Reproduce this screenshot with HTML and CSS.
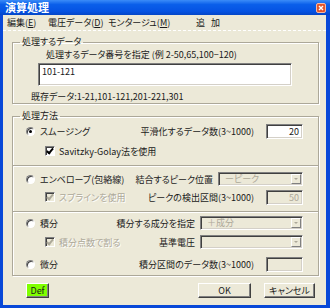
FILE: index.html
```html
<!DOCTYPE html>
<html lang="ja">
<head>
<meta charset="utf-8">
<link rel="stylesheet" href="styles.css">
</head>
<body>
<div class="window">
  <div class="titlebar">
    <span class="title">演算処理</span>
    <span class="close"><svg width="10" height="10" viewBox="0 0 10 10"><rect x="0.5" y="0.5" width="9" height="9" rx="1.5" fill="#e2552c" stroke="#f7b9a3"/><path d="M3 3L7 7M7 3L3 7" stroke="#fff" stroke-width="1.4"/></svg></span>
  </div>
  <div class="frame">
    <div class="menubar">
      <span class="menu m1">編集(<u>E</u>)</span>
      <span class="menu m2">電圧データ(<u>D</u>)</span>
      <span class="menu m3">モンタージュ(<u>M</u>)</span>
      <span class="menu m4">追 加</span>
    </div>
    <div class="content">
      <fieldset class="group g1">
        <legend>処理するデータ</legend>
        <div class="hint">処理するデータ番号を指定 (例 2-50,65,100−120)</div>
        <div class="textbox">101-121</div>
        <div class="existing">既存データ:1-21,101-121,201-221,301</div>
      </fieldset>
      <fieldset class="group g2">
        <legend>処理方法</legend>
        <div class="row r1">
          <div class="left radio-left"><span class="radio checked"></span><span>スムージング</span></div>
          <div class="right"><span class="lbl lbl-num">平滑化するデータ数(3~1000)</span><span class="numbox">20</span></div>
        </div>
        <div class="row r2">
          <div class="left check-left"><span class="check"></span><span>Savitzky-Golay法を使用</span></div>
        </div>
        <div class="sep"></div>
        <div class="row r3">
          <div class="left radio-left"><span class="radio"></span><span>エンベロープ(包絡線)</span></div>
          <div class="right"><span class="lbl lbl-combo">結合するピーク位置</span><span class="combo c-peak"><span class="ctext">ーピーク</span><span class="cbtn"></span></span></div>
        </div>
        <div class="row r4">
          <div class="left check-left disabled"><span class="check dis"></span><span>スプラインを使用</span></div>
          <div class="right"><span class="lbl lbl-num">ピークの検出区間(3~1000)</span><span class="numbox dis">50</span></div>
        </div>
        <div class="sep"></div>
        <div class="row r5">
          <div class="left radio-left"><span class="radio"></span><span>積分</span></div>
          <div class="right"><span class="lbl lbl-combo">積分する成分を指定</span><span class="combo c-wide"><span class="ctext">＋成分</span><span class="cbtn"></span></span></div>
        </div>
        <div class="row r6">
          <div class="left check-left disabled"><span class="check dis"></span><span>積分点数で割る</span></div>
          <div class="right"><span class="lbl lbl-combo">基準電圧</span><span class="combo c-wide"><span class="ctext"></span><span class="cbtn"></span></span></div>
        </div>
        <div class="row r7">
          <div class="left radio-left"><span class="radio"></span><span>微分</span></div>
          <div class="right"><span class="lbl lbl-num">積分区間のデータ数(3~1000)</span><span class="numbox dis"></span></div>
        </div>
      </fieldset>
      <div class="buttons">
        <span class="btn def">Def</span>
        <span class="btn ok">OK</span>
        <span class="btn cancel">キャンセル</span>
      </div>
    </div>
  </div>
</div>
</body>
</html>
```
FILE: styles.css
```css
html, body {
  margin: 0;
  padding: 0;
}
body {
  font-family: "Noto Sans CJK JP", "Noto Sans", sans-serif;
  font-size: 9px;
  font-feature-settings: "palt";
  color: #1a1a1a;
  background: #fff;
  white-space: nowrap;
}
.window {
  width: 330px;
  height: 308px;
  display: flex;
  flex-direction: column;
}
.titlebar {
  height: 15px;
  flex: none;
  display: flex;
  align-items: center;
  background: linear-gradient(#3b8cf8, #0a5fea 30%, #0553e3 75%, #0446c6);
  color: #fff;
  padding: 0 4px 0 5px;
}
.title {
  font-weight: bold;
  font-size: 11px;
  line-height: 15px;
  font-feature-settings: normal;
}
.close {
  margin-left: auto;
  display: flex;
}
.frame {
  flex: 1;
  background: #ece9d8;
  border-style: solid;
  border-color: #0848d8;
  border-width: 0 4px 3px 3px;
  display: flex;
  flex-direction: column;
}
.menubar {
  height: 15px;
  display: flex;
  align-items: center;
  padding-left: 4px;
  border-bottom: 1px dashed #fff;
  line-height: 15px;
}
.m1 { width: 41px; }
.m2 { width: 60px; }
.m3 { width: 88px; }
.m4 { letter-spacing: 2px; }
.content {
  padding: 5px 7px 0 9px;
  display: flex;
  flex-direction: column;
}
.group {
  margin: 0;
  padding: 0;
  border: 1px solid #aca899;
  box-shadow: 1px 1px 0 #fff, inset 1px 1px 0 #fff;
  min-width: 0;
}
.group legend {
  padding: 0 2px;
  margin-left: 7px;
  line-height: 12px;
  height: 12px;
}
.hint {
  line-height: 12px;
  margin-top: 1px;
  padding-left: 33px;
}
.textbox {
  margin: 2px 0 0 25px;
  width: 254px;
  height: 23px;
  box-sizing: border-box;
  background: #fff;
  border: 1px solid;
  border-color: #808080 #fff #fff #808080;
  box-shadow: inset 1px 1px 0 #404040, inset -1px -1px 0 #d4d0c8;
  padding: 2px 3px;
  line-height: 12px;
}
.existing {
  line-height: 12px;
  margin-top: 5px;
  padding-left: 18px;
}
.g2 { margin-top: 6px; }
.row {
  display: flex;
  align-items: center;
  height: 16px;
  padding-right: 15px;
}
.left {
  display: flex;
  align-items: center;
  flex: none;
}
.radio-left { padding-left: 13px; gap: 5px; }
.check-left { padding-left: 32px; gap: 4px; }
.disabled { color: #aca899; text-shadow: 1px 1px 0 #fff; }
.right {
  margin-left: auto;
  display: flex;
  align-items: center;
  flex: none;
}
.lbl-num { margin-right: 12px; }
.lbl-combo { margin-right: 5px; }
.r1 { margin-top: 1px; }
.r2 { margin-top: 4px; }
.sep {
  height: 1px;
  background: #aca899;
  border-bottom: 1px solid #fff;
  margin-top: 6px;
}
.r3 { margin-top: 4px; }
.r4 { margin-top: 2px; }
.r5 { margin-top: 2px; }
.r6 { margin-top: 3px; }
.r7 { margin-top: 6px; margin-bottom: 3px; }
.radio {
  width: 9px;
  height: 9px;
  box-sizing: border-box;
  border-radius: 50%;
  background: #fff;
  border: 1px solid;
  border-color: #808080 #fff #fff #808080;
  box-shadow: inset 1px 1px 0 #404040;
  position: relative;
  flex: none;
}
.radio.checked::after {
  content: "";
  position: absolute;
  left: 2px;
  top: 2px;
  width: 3px;
  height: 3px;
  border-radius: 50%;
  background: #000;
}
.check {
  width: 10px;
  height: 10px;
  box-sizing: border-box;
  background: #fff;
  border: 1px solid;
  border-color: #808080 #fff #fff #808080;
  box-shadow: inset 1px 1px 0 #404040;
  position: relative;
  flex: none;
}
.check::after {
  content: "";
  position: absolute;
  left: 2px;
  top: 0px;
  width: 2px;
  height: 5px;
  border: solid #000;
  border-width: 0 2px 2px 0;
  transform: rotate(40deg);
}
.check.dis { background: #ece9d8; }
.check.dis::after { border-color: #aca899; }
.numbox {
  width: 37px;
  height: 15px;
  box-sizing: border-box;
  background: #fff;
  border: 1px solid;
  border-color: #808080 #fff #fff #808080;
  box-shadow: inset 1px 1px 0 #404040, inset -1px -1px 0 #d4d0c8;
  text-align: right;
  padding-right: 3px;
  line-height: 13px;
}
.numbox.dis { background: #ece9d8; color: #aca899; }
.combo {
  height: 14px;
  box-sizing: border-box;
  background: #ece9d8;
  border: 1px solid;
  border-color: #808080 #fff #fff #808080;
  box-shadow: inset 1px 1px 0 #404040, inset -1px -1px 0 #d4d0c8;
  display: flex;
  align-items: center;
  color: #aca899;
  padding: 0 1px 0 6px;
}
.c-peak { width: 85px; }
.c-wide { width: 103px; }
.ctext { flex: 1; line-height: 12px; }
.cbtn {
  width: 10px;
  height: 10px;
  box-sizing: border-box;
  border: 1px solid;
  border-color: #fff #808080 #808080 #fff;
  background: #ece9d8;
  position: relative;
}
.cbtn::after {
  content: "";
  position: absolute;
  left: 2px;
  top: 3px;
  border-style: solid;
  border-width: 2px 2px 0 2px;
  border-color: #aca899 transparent transparent transparent;
}
.buttons {
  display: flex;
  align-items: center;
  margin-top: 7px;
}
.btn {
  height: 15px;
  box-sizing: border-box;
  display: flex;
  align-items: center;
  justify-content: center;
  border: 1px solid;
  border-color: #fff #404040 #404040 #fff;
  box-shadow: inset -1px -1px 0 #808080;
  background: #ece9d8;
  line-height: 12px;
}
.def {
  margin-left: 14px;
  width: 23px;
  background: #80ff00;
}
.ok { margin-left: auto; width: 53px; }
.cancel { margin-left: 13px; width: 51px; margin-right: 4px; }
```
